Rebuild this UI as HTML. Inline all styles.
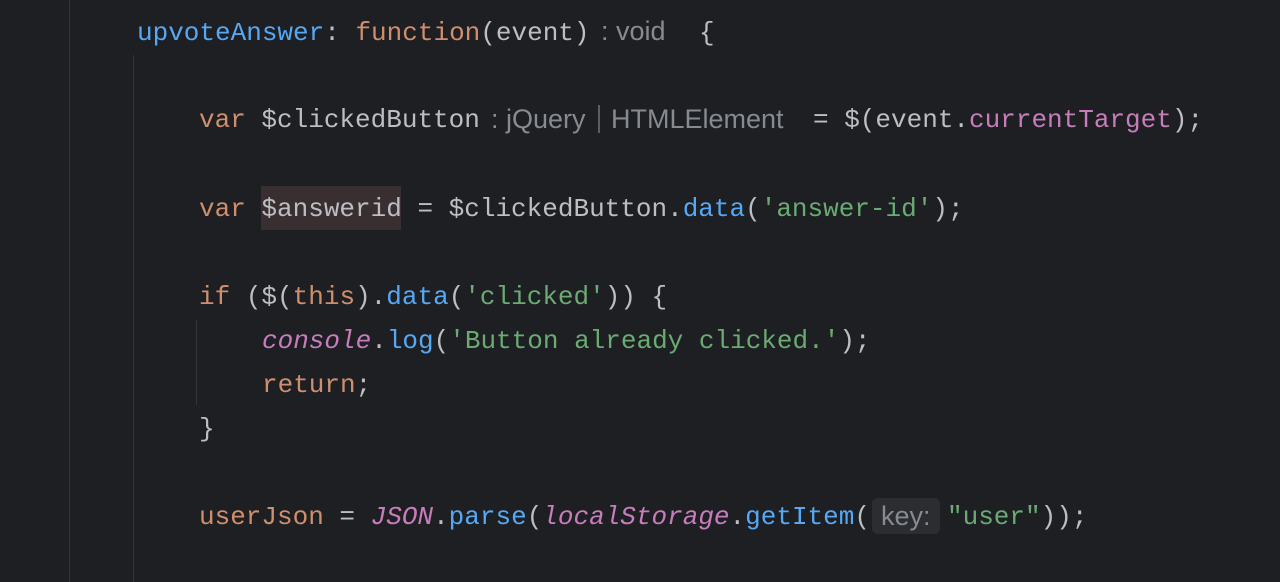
<!DOCTYPE html>
<html><head><meta charset="utf-8"><style>
html,body{margin:0;padding:0;background:#1e1f22;width:1280px;height:582px;overflow:hidden;position:relative}
.l{position:absolute;font-family:"Liberation Mono",monospace;font-size:26px;line-height:44px;height:44px;white-space:pre;color:#bcbec4}
.k{color:#cf8e6d}.f{color:#56a8f5}.s{color:#6aab73}.p{color:#c77dbb;font-style:italic}
.h{position:absolute;font-family:"Liberation Sans",sans-serif;font-size:27px;line-height:44px;color:#868a91;white-space:pre}
.g{position:absolute;width:1px;background:#313438}
</style></head><body>
<div class="g" style="left:69px;top:0;height:582px"></div>
<div class="g" style="left:133px;top:55px;height:527px"></div>
<div class="g" style="left:196px;top:320px;height:85px"></div>

<div class="l" style="left:137px;top:11px"><span class="f">upvoteAnswer</span>: <span class="k">function</span>(event)</div>
<div class="h" style="left:601px;top:9px">: void</div>
<div class="l" style="left:699px;top:11px">{</div>

<div class="l" style="left:199px;top:98px"><span class="k">var</span> $clickedButton</div>
<div class="h" style="left:491px;top:97px">: jQuery</div>
<div style="position:absolute;left:598px;top:105px;width:2px;height:28px;background:#5a5d63"></div>
<div class="h" style="left:611px;top:97px">HTMLElement</div>
<div class="l" style="left:813px;top:98px">= $(event.<span style="color:#c77dbb">currentTarget</span>);</div>

<div style="position:absolute;left:261px;top:186px;width:140px;height:44px;background:#3a2f30"></div>
<div class="l" style="left:199px;top:187px"><span class="k">var</span> $answerid = $clickedButton.<span class="f">data</span>(<span class="s">'answer-id'</span>);</div>

<div class="l" style="left:199px;top:275px"><span class="k">if</span> ($(<span class="k">this</span>).<span class="f">data</span>(<span class="s">'clicked'</span>)) {</div>
<div class="l" style="left:262px;top:319px"><span class="p">console</span>.<span class="f">log</span>(<span class="s">'Button already clicked.'</span>);</div>
<div class="l" style="left:262px;top:363px"><span class="k">return</span>;</div>
<div class="l" style="left:199px;top:407px">}</div>

<div class="l" style="left:199px;top:495px"><span class="k">userJson</span> = <span class="p">JSON</span>.<span class="f">parse</span>(<span class="p">localStorage</span>.<span class="f">getItem</span>(</div>
<div style="position:absolute;left:872px;top:498px;width:68px;height:36px;background:#2b2d30;border-radius:6px"></div>
<div class="h" style="left:881px;top:494px">key:</div>
<div class="l" style="left:947px;top:495px"><span class="s">"user"</span>));</div>
</body></html>
